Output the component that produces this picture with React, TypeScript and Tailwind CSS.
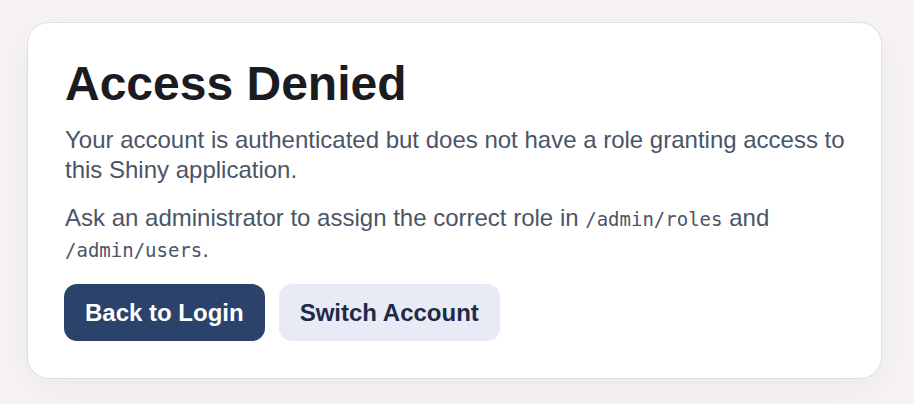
export default function App() {
  return (
    <div
      className="min-h-[404px] w-full bg-[#f7f4f3] px-[27px] pt-[22px] pb-6"
      style={{ fontFamily: '"Liberation Sans", Arial, sans-serif' }}
    >
      <div className="w-[855px] rounded-[22px] border border-[#dbe0ea] bg-white py-[37px] pl-[37px] pr-[28px] shadow-[0_10px_40px_rgba(30,30,50,0.06)]">
        <h1 className="text-[48px] font-bold leading-none text-[#1b1c21]">Access Denied</h1>
        <p className="mt-[17px] text-[24px] leading-[30px] text-[#4a5568]">
          Your account is authenticated but does not have a role granting access to this Shiny application.
        </p>
        <p className="mt-[18px] text-[24px] leading-[30px] text-[#4a5568]">
          Ask an administrator to assign the correct role in{' '}
          <code className="text-[19px]" style={{ fontFamily: '"DejaVu Sans Mono", monospace' }}>
            /admin/roles
          </code>{' '}
          and{' '}
          <code className="text-[19px]" style={{ fontFamily: '"DejaVu Sans Mono", monospace' }}>
            /admin/users
          </code>
          .
        </p>
        <div className="mt-[19px] flex gap-[14px]">
          <button className="-ml-px h-[57px] rounded-[13px] bg-[#2b426a] px-[21px] text-[24px] font-bold text-white">
            Back to Login
          </button>
          <button className="h-[57px] rounded-[13px] bg-[#e8ebf5] px-[21px] text-[24px] font-bold text-[#1f2a48]">
            Switch Account
          </button>
        </div>
      </div>
    </div>
  )
}
